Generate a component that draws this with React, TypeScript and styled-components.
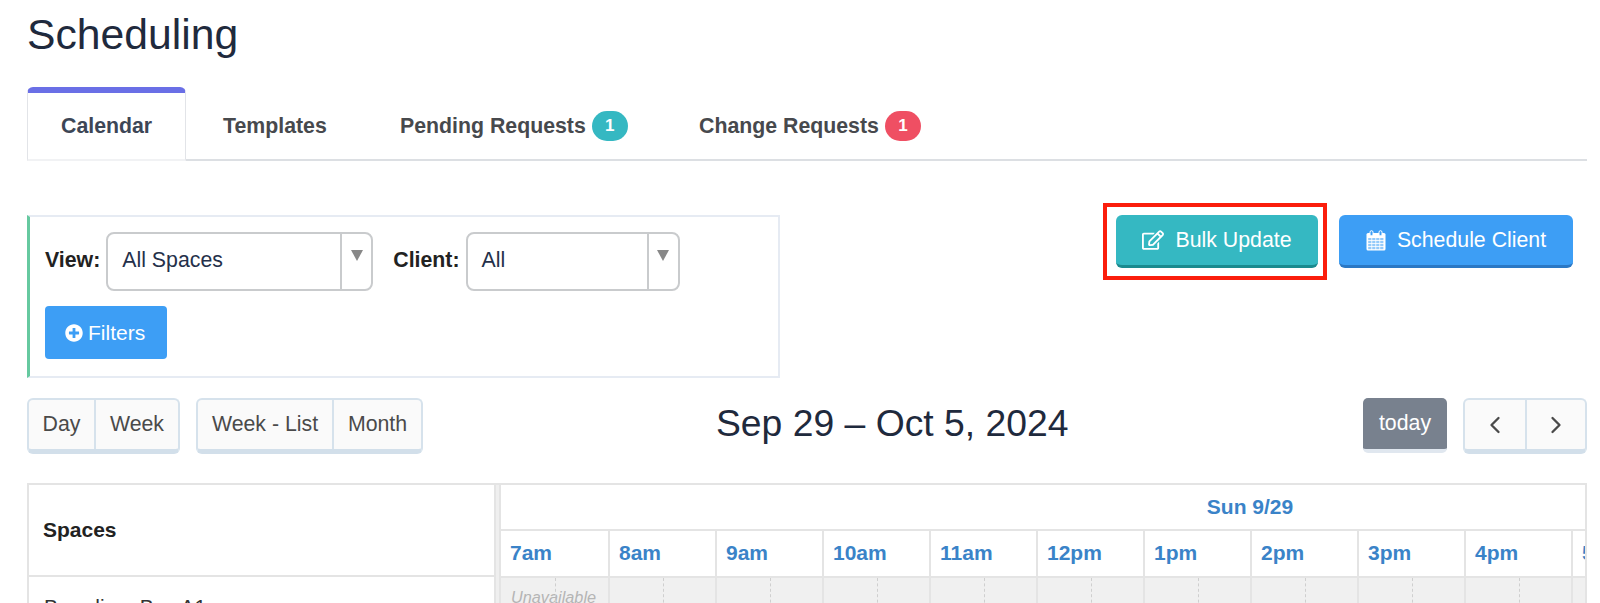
import styled, { createGlobalStyle } from "styled-components";
import { FaPlusCircle, FaRegEdit } from "react-icons/fa";
import { ChevronLeft, ChevronRight } from "lucide-react";

const hours = ["7am", "8am", "9am", "10am", "11am", "12pm", "1pm", "2pm", "3pm", "4pm", "5pm"];

const GlobalStyle = createGlobalStyle`
  html, body {
    margin: 0;
    padding: 0;
    background: #fff;
    font-family: "Liberation Sans", Arial, sans-serif;
    overflow: hidden;
  }
`;

const Page = styled.div`
  width: 1560px;
  height: 603px;
  padding-left: 27px;
  overflow: hidden;
`;

const Title = styled.h1`
  margin: 0;
  height: 87px;
  padding-top: 9px;
  box-sizing: border-box;
  font-size: 42.7px;
  line-height: 50px;
  font-weight: 400;
  color: #1f2a3d;
`;

const Tabs = styled.div`
  display: flex;
  height: 74px;
  box-sizing: border-box;
  border-bottom: 2px solid #dcdfe3;
`;

const Tab = styled.div<{ $active?: boolean; $width: number }>`
  width: ${(p) => p.$width}px;
  height: ${(p) => (p.$active ? "74px" : "72px")};
  box-sizing: border-box;
  display: flex;
  align-items: center;
  padding-top: ${(p) => (p.$active ? "0" : "6px")};
  padding-left: ${(p) => (p.$active ? "33px" : "37px")};
  font-size: 21.3px;
  font-weight: 700;
  color: ${(p) => (p.$active ? "#3d4656" : "#47494d")};
  background: #fff;
  ${(p) =>
    p.$active &&
    `border: 1px solid #e2e4e8;
     border-top: 6px solid #6a6fe6;
     border-bottom: 2px solid #f1f2f4;
     border-radius: 6px 6px 0 0;`}
`;

const Badge = styled.span<{ $color: string }>`
  display: inline-flex;
  align-items: center;
  justify-content: center;
  width: 36px;
  height: 30px;
  margin-left: 6px;
  border-radius: 15px;
  background: ${(p) => p.$color};
  color: #fff;
  font-size: 17px;
  font-weight: 700;
`;

const ControlRow = styled.div`
  display: flex;
  justify-content: space-between;
  margin-top: 54px;
  height: 163px;
`;

const FilterPanel = styled.div`
  width: 753px;
  height: 163px;
  box-sizing: border-box;
  border: 2px solid #e6ebf3;
  border-left: 3px solid #66c9a0;
  padding: 15px 0 0 15px;
`;

const FilterLine = styled.div`
  display: flex;
  align-items: flex-start;
`;

const FilterLabel = styled.label<{ $gap: number }>`
  font-size: 21.3px;
  font-weight: 700;
  color: #222;
  line-height: 57px;
  margin-left: ${(p) => p.$gap}px;
  margin-right: 6px;
`;

const Select = styled.div<{ $width: number }>`
  width: ${(p) => p.$width}px;
  height: 59px;
  box-sizing: border-box;
  border: 2px solid #c9cbcd;
  border-radius: 8px;
  display: flex;
  font-size: 21.3px;
  color: #24304a;
`;

const SelectValue = styled.div`
  flex: 1;
  padding-left: 14px;
  line-height: 53px;
`;

const SelectArrow = styled.div`
  width: 29px;
  border-left: 2px solid #c9cbcd;
  display: flex;
  justify-content: center;
  align-items: flex-start;
  padding-top: 16px;

  &::after {
    content: "";
    width: 0;
    height: 0;
    border-left: 6px solid transparent;
    border-right: 6px solid transparent;
    border-top: 11px solid #888;
  }
`;

const FilterButton = styled.button`
  display: flex;
  align-items: center;
  gap: 5px;
  width: 122px;
  height: 53px;
  margin-top: 15px;
  padding: 0 0 0 20px;
  border: none;
  border-radius: 4px;
  background: #3d9ef5;
  color: #fff;
  font-family: inherit;
  font-size: 21px;
`;

const Actions = styled.div`
  display: flex;
  gap: 21px;
  margin-right: 14px;
`;

const Highlight = styled.div`
  margin: -12px -9px 0 -13px;
  padding: 8px 5px 8px 9px;
  height: 77px;
  box-sizing: border-box;
  border: 4px solid #fb1d0c;
`;

const ActionButton = styled.button<{ $bg: string; $edge: string; $width: number }>`
  display: flex;
  align-items: center;
  justify-content: center;
  gap: 11px;
  width: ${(p) => p.$width}px;
  height: 53px;
  padding: 0;
  box-sizing: border-box;
  border: none;
  border-bottom: 3px solid ${(p) => p.$edge};
  border-radius: 6px;
  background: ${(p) => p.$bg};
  color: #fff;
  font-family: inherit;
  font-size: 21.3px;
`;

const Toolbar = styled.div`
  display: flex;
  align-items: flex-start;
  margin-top: 20px;
  height: 85px;
`;

const ToolLeft = styled.div`
  display: flex;
  gap: 16px;
  width: 689px;
`;

const DateTitle = styled.h2`
  margin: 0;
  width: 649px;
  box-sizing: border-box;
  padding-left: 1px;
  font-size: 37.3px;
  line-height: 50px;
  font-weight: 400;
  color: #1f2a3d;
`;

const ToolRight = styled.div`
  display: flex;
  gap: 16px;
`;

const ButtonGroup = styled.div`
  display: flex;
  height: 56px;
  box-sizing: border-box;
  border: 2px solid #d6e2ec;
  border-bottom: 5px solid #d2dfea;
  border-radius: 6px;
  background: #fafafa;
`;

const GroupButton = styled.div<{ $width: number }>`
  width: ${(p) => p.$width}px;
  display: flex;
  align-items: center;
  justify-content: center;
  font-size: 21.3px;
  color: #4a4a4a;

  & + & {
    border-left: 2px solid #d6e2ec;
  }
`;

const TodayButton = styled.div`
  width: 84px;
  height: 55px;
  box-sizing: border-box;
  display: flex;
  align-items: center;
  justify-content: center;
  background: #78818e;
  border-bottom: 4px solid #e0e7ef;
  border-radius: 5px;
  color: #fff;
  font-size: 21.3px;
`;

const Grid = styled.div`
  display: flex;
  width: 1560px;
  height: 120px;
  box-sizing: border-box;
  border-top: 2px solid #e4e4e4;
  overflow: hidden;
`;

const SpacesColumn = styled.div`
  width: 469px;
  flex: none;
  box-sizing: border-box;
  border-left: 2px solid #e4e4e4;
  border-right: 2px solid #e4e4e4;
`;

const SpacesHeader = styled.div`
  height: 92px;
  box-sizing: border-box;
  border-bottom: 2px solid #e4e4e4;
  padding-left: 14px;
  display: flex;
  align-items: center;
  font-size: 21px;
  font-weight: 700;
  color: #222;
`;

const SpaceName = styled.div`
  padding: 18px 0 0 15px;
  font-size: 21px;
  color: #333;
  white-space: nowrap;
`;

const Splitter = styled.div`
  flex: 0 0 3px;
  background: #efefef;
`;

const TimeColumn = styled.div`
  flex: 1;
  min-width: 0;
  overflow: hidden;
  border-left: 2px solid #e4e4e4;
  border-right: 2px solid #e4e4e4;
`;

const DayCell = styled.div`
  width: 1498px;
  height: 44px;
  line-height: 44px;
  text-align: center;
  font-size: 21px;
  font-weight: 700;
  color: #3a83c8;
`;

const HourRow = styled.div`
  display: flex;
  height: 45px;
  border-top: 2px solid #e4e4e4;
  border-bottom: 2px solid #e4e4e4;
`;

const HourCell = styled.div`
  flex: 0 0 107px;
  box-sizing: border-box;
  padding-left: 9px;
  line-height: 44px;
  font-size: 21px;
  font-weight: 700;
  color: #3a83c8;
  white-space: nowrap;
  overflow: hidden;

  & + & {
    border-left: 2px solid #e4e4e4;
  }
`;

const SlotRow = styled.div`
  display: flex;
  height: 30px;
  background: #f0f0f0;
`;

const SlotCell = styled.div`
  flex: 0 0 107px;
  box-sizing: border-box;
  display: flex;

  & + & {
    border-left: 2px solid #e4e4e4;
  }
`;

const SlotHalf = styled.div`
  flex: 0 0 50%;
  min-width: 0;
  box-sizing: border-box;
  padding-left: 10px;
  font-size: 16.3px;
  font-style: italic;
  color: #b5b5b5;
  line-height: 38px;
  white-space: nowrap;

  & + & {
    border-left: 1px dashed #cfcfcf;
  }
`;

const CalendarGlyph = styled.svg`
  flex: none;
  display: block;
`;

const calendarCells = [0, 1, 2, 3].flatMap((r) => [0, 1, 2, 3].map((c) => ({ r, c })));

const CalendarIcon = () => (
  <CalendarGlyph width="20" height="21" viewBox="0 0 20 21">
    <rect x="0.5" y="3" width="19" height="17.5" rx="1.5" fill="#fff" />
    {calendarCells.map(({ r, c }) => (
      <rect
        key={`${r}-${c}`}
        x={2.2 + c * 4}
        y={8 + r * 3}
        width="3.2"
        height="2.2"
        fill="#3d9ef5"
        fillOpacity="0.55"
      />
    ))}
    <rect x="4" y="0.7" width="3" height="5" rx="1.5" fill="#3d9ef5" stroke="#fff" />
    <rect x="13" y="0.7" width="3" height="5" rx="1.5" fill="#3d9ef5" stroke="#fff" />
  </CalendarGlyph>
);

export default function App() {
  return (
    <Page>
      <GlobalStyle />
      <Title>Scheduling</Title>
      <Tabs>
        <Tab $active $width={159}>Calendar</Tab>
        <Tab $width={177}>Templates</Tab>
        <Tab $width={299}>
          Pending Requests<Badge $color="#35b8c2">1</Badge>
        </Tab>
        <Tab $width={300}>
          Change Requests<Badge $color="#ef4f63">1</Badge>
        </Tab>
      </Tabs>
      <ControlRow>
        <FilterPanel>
          <FilterLine>
            <FilterLabel $gap={0}>View:</FilterLabel>
            <Select $width={267}>
              <SelectValue>All Spaces</SelectValue>
              <SelectArrow />
            </Select>
            <FilterLabel $gap={20}>Client:</FilterLabel>
            <Select $width={214}>
              <SelectValue>All</SelectValue>
              <SelectArrow />
            </Select>
          </FilterLine>
          <FilterButton>
            <FaPlusCircle size={18} />
            Filters
          </FilterButton>
        </FilterPanel>
        <Actions>
          <Highlight>
            <ActionButton $bg="#35b8c2" $edge="#1a8a8e" $width={202}>
              <FaRegEdit size={22} />
              Bulk Update
            </ActionButton>
          </Highlight>
          <ActionButton $bg="#3d9ef5" $edge="#2b78c4" $width={234}>
            <CalendarIcon />
            Schedule Client
          </ActionButton>
        </Actions>
      </ControlRow>
      <Toolbar>
        <ToolLeft>
          <ButtonGroup>
            <GroupButton $width={65}>Day</GroupButton>
            <GroupButton $width={82}>Week</GroupButton>
          </ButtonGroup>
          <ButtonGroup>
            <GroupButton $width={134}>Week - List</GroupButton>
            <GroupButton $width={87}>Month</GroupButton>
          </ButtonGroup>
        </ToolLeft>
        <DateTitle>Sep 29 – Oct 5, 2024</DateTitle>
        <ToolRight>
          <TodayButton>today</TodayButton>
          <ButtonGroup>
            <GroupButton $width={60}>
              <ChevronLeft size={28} strokeWidth={2} />
            </GroupButton>
            <GroupButton $width={58}>
              <ChevronRight size={28} strokeWidth={2} />
            </GroupButton>
          </ButtonGroup>
        </ToolRight>
      </Toolbar>
      <Grid>
        <SpacesColumn>
          <SpacesHeader>Spaces</SpacesHeader>
          <SpaceName>Boarding&nbsp; Bay A1</SpaceName>
        </SpacesColumn>
        <Splitter />
        <TimeColumn>
          <DayCell>Sun 9/29</DayCell>
          <HourRow>
            {hours.map((h) => (
              <HourCell key={h}>{h}</HourCell>
            ))}
          </HourRow>
          <SlotRow>
            {hours.map((h, i) => (
              <SlotCell key={h}>
                <SlotHalf>{i === 0 ? "Unavailable" : ""}</SlotHalf>
                <SlotHalf />
              </SlotCell>
            ))}
          </SlotRow>
        </TimeColumn>
      </Grid>
    </Page>
  );
}
